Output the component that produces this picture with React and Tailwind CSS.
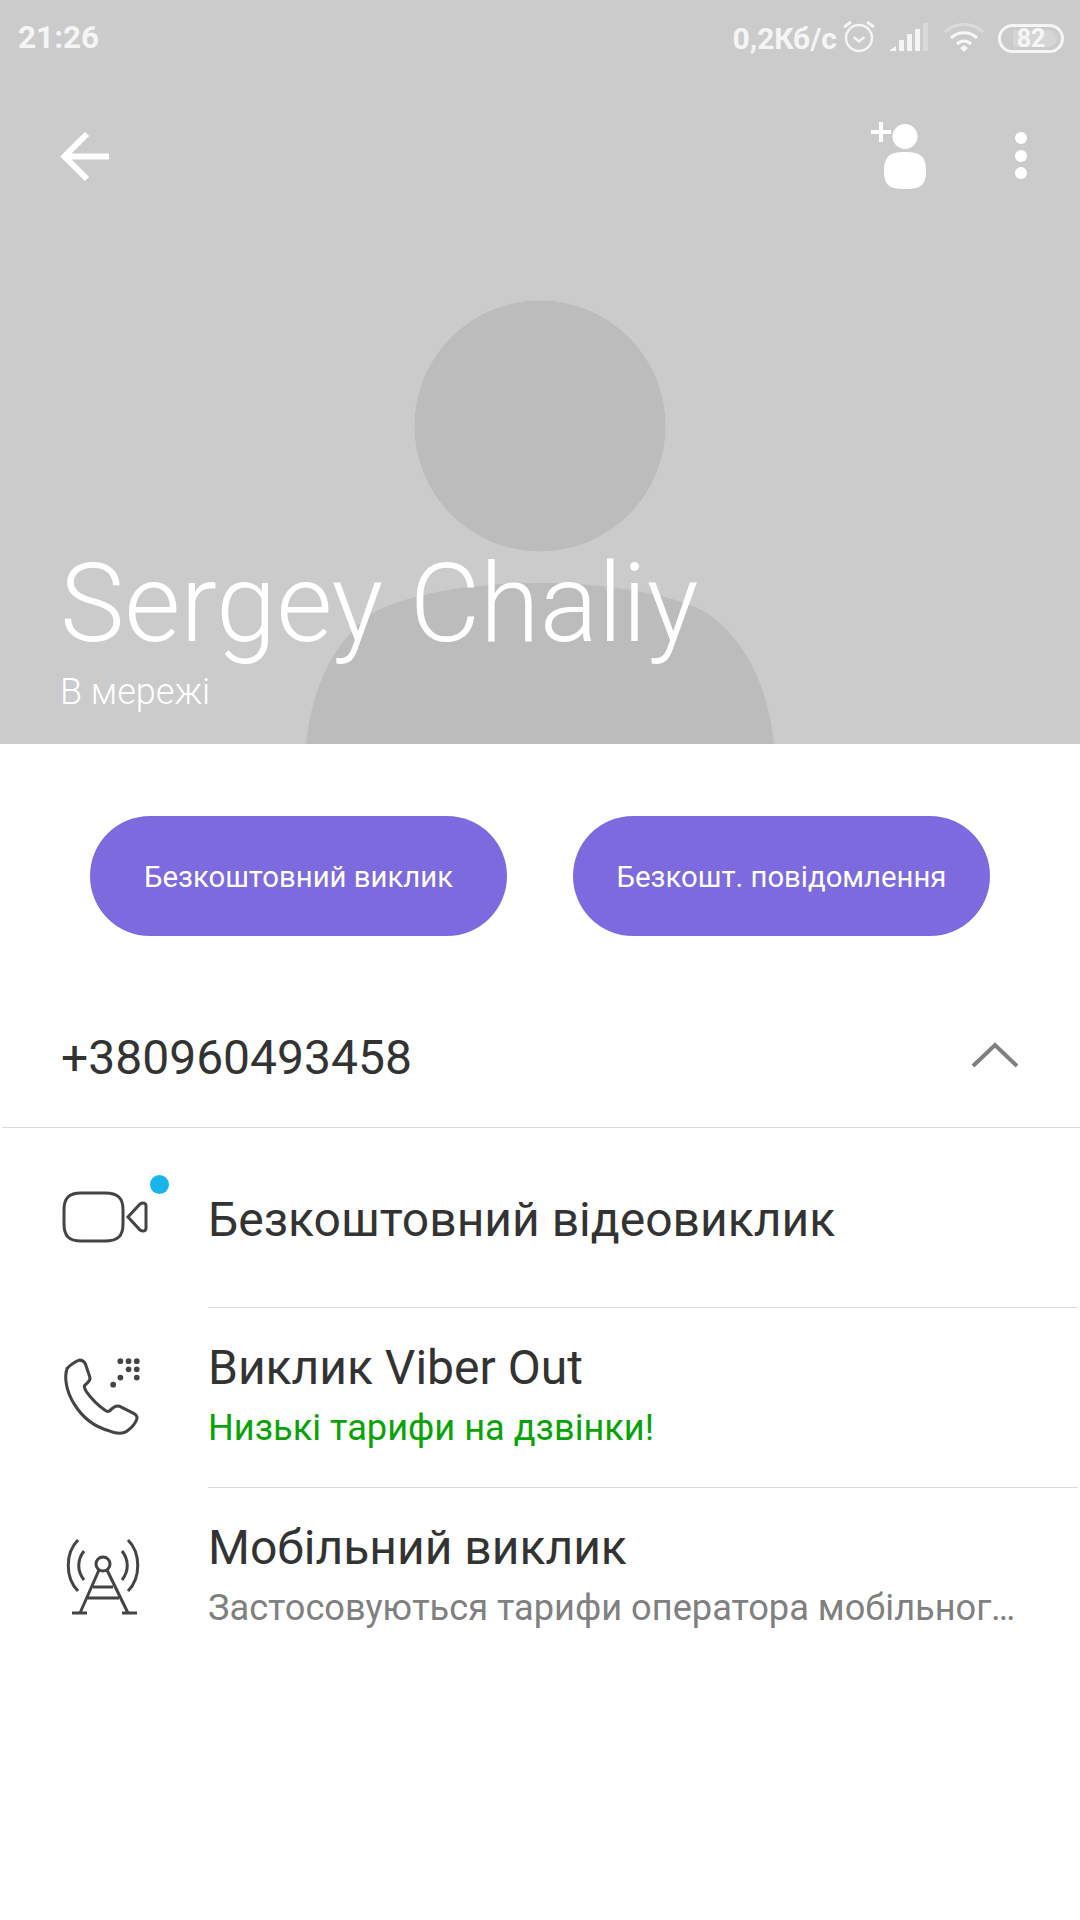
import React from 'react';

function StatusBar() {
  return (
    <div className="h-[76px] flex items-center justify-between pl-[18px] pr-[16px] text-white/80 font-bold">
      <span className="text-[31.500px]">21:26</span>
      <div className="flex items-center">
        <span className="text-[30px] mr-[4px]">0,2Кб/с</span>
        <svg width="36" height="36" viewBox="0 0 36 36" fill="none" stroke="white" strokeOpacity="0.8" strokeWidth="2.4" className="mr-[13px] -mt-[4px]">
          <circle cx="18" cy="20" r="13" />
          <path d="M12.5 19l5.5 4.5 5.5-4.5" />
          <path d="M3 9l7-5M33 9l-7-5" strokeWidth="3" />
        </svg>
        <svg width="38" height="30" viewBox="0 0 38 30" fill="white" className="mr-[16px]">
          <path d="M0 27l6-4v5H0z" fillOpacity="0.8" />
          <rect x="9" y="17" width="5" height="11" fillOpacity="0.8" />
          <rect x="17" y="11" width="5" height="17" fillOpacity="0.8" />
          <rect x="25" y="6" width="5" height="22" fillOpacity="0.8" />
          <rect x="33" y="0" width="5" height="28" fillOpacity="0.3" />
        </svg>
        <svg width="40" height="32" viewBox="0 0 40 32" fill="none" stroke="white" strokeWidth="3.2" className="mr-[14px]">
          <path d="M1 10C11 0 29 0 39 10" strokeOpacity="0.3" />
          <path d="M7 16c7-7 19-7 26 0" strokeOpacity="0.85" />
          <path d="M13 22c4-4 10-4 14 0" strokeOpacity="0.85" />
          <path d="M16 26l4-3 4 3-4 4z" fill="white" fillOpacity="0.85" stroke="none" />
        </svg>
        <div className="relative w-[66px] h-[29px] rounded-full border-[3px] border-white/80 flex items-center justify-center">
          <div className="absolute left-[12px] top-[3px] h-[17px] w-[44px] rounded-r-full bg-white/20"></div>
          <span className="relative text-[25px] leading-none text-white/80 font-bold">82</span>
        </div>
      </div>
    </div>
  );
}

function Header() {
  return (
    <div className="relative h-[744px] bg-[#cbcbcb] overflow-hidden font-['Roboto',sans-serif]">
      {/* avatar placeholder */}
      <svg className="absolute left-0 top-0" width="1080" height="744" viewBox="0 0 1080 744" fill="#bcbcbc">
        <circle cx="540" cy="426" r="125.5" />
        <path d="M306 744C312 685 335 640 373 613C410 592 480 583 540 583C600 583 670 592 707 613C745 640 768 685 774 744Z" />
      </svg>

      <div className="relative h-full flex flex-col">
        <StatusBar />
        <div className="flex items-start justify-between pl-[60px] pr-[53px] pt-[48px]">
          <svg width="50" height="50" viewBox="0 0 50 50" fill="none" stroke="white" strokeWidth="6" className="mt-[8px]">
            <path d="M49 24.5H4M27 2L4.500 24.500L27 47" />
          </svg>
          <div className="flex items-start">
            <svg width="56" height="70" viewBox="0 0 56 70" fill="white" className="-mt-[4px] mr-[88px]">
              <path d="M0 10h8V2h4v8h8v4h-8v8H8v-8H0z" />
              <circle cx="34" cy="16.500" r="12.500" />
              <path d="M34 32c16 0 21 5 21 19 0 14-5 18-21 18s-21-4-21-18c0-14 5-19 21-19z" />
            </svg>
            <div className="flex flex-col gap-[5.500px] mt-[8px]">
              <div className="w-[12px] h-[12px] rounded-full bg-white"></div>
              <div className="w-[12px] h-[12px] rounded-full bg-white"></div>
              <div className="w-[12px] h-[12px] rounded-full bg-white"></div>
            </div>
          </div>
        </div>
        <div className="mt-auto pl-[60px] pb-[32px] text-white">
          <div className="text-[108.500px] leading-[110px] font-light">Sergey Chaliy</div>
          <div className="text-[36px] leading-[40px] font-light mt-[13px]">В мережі</div>
        </div>
      </div>
    </div>
  );
}

function Row({ icon, title, sub, subColor, last }) {
  return (
    <div className="flex h-[180px]">
      <div className="w-[208px] shrink-0 relative">{icon}</div>
      <div className={`flex-1 min-w-0 mr-[2px] flex flex-col justify-center ${last ? '' : 'border-b border-[#dcdcdc]'} ${sub ? 'pb-[8px]' : 'pt-[4px]'}`}>
        <div className="text-[48px] leading-[60px] text-[#333333]">{title}</div>
        {sub && <div className={`text-[36.200px] leading-[44px] ${subColor} pr-[56px] truncate mt-[8px]`}>{sub}</div>}
      </div>
    </div>
  );
}

export default function App() {
  return (
    <div className="w-[1080px] h-[1920px] bg-white overflow-hidden font-['Roboto',sans-serif]">
      <Header />

      <div className="flex pl-[90px] gap-[66px] pt-[72px]">
        <button className="w-[417px] h-[120px] rounded-full bg-[#7c6ade] text-white text-[29.300px] pt-[3px]">Безкоштовний виклик</button>
        <button className="w-[417px] h-[120px] rounded-full bg-[#7c6ade] text-white text-[29.300px] pt-[3px]">Безкошт. повідомлення</button>
      </div>

      <div className="mt-[36px] ml-[2px] h-[156px] border-b border-[#dcdcdc] flex items-center justify-between pl-[59px] pr-[61px] pt-[16px]">
        <span className="text-[48px] text-[#333333]">+380960493458</span>
        <svg width="48" height="26" viewBox="0 0 48 26" fill="none" stroke="#808080" strokeWidth="4" className="-mt-[5px]">
          <path d="M2 24L24 3L46 24" />
        </svg>
      </div>

      <Row
        title="Безкоштовний відеовиклик"
        icon={
          <>
            <svg className="absolute left-[61px] top-[62px]" width="90" height="54" viewBox="0 0 90 54" fill="none" stroke="#444444" strokeWidth="3">
              <path d="M20 3h24c13 0 18 5 18 17v14c0 12-5 17-18 17H20C8 51 3 46 3 34V20C3 8 8 3 20 3z" />
              <path d="M67 27l12-13c3-2 6-1 6 2v22c0 3-3 4-6 2z" />
            </svg>
            <div className="absolute left-[150px] top-[47px] w-[19px] h-[19px] rounded-full bg-[#17b5ec]"></div>
          </>
        }
      />
      <Row
        title="Виклик Viber Out"
        sub="Низькі тарифи на дзвінки!"
        subColor="text-[#09a309]"
        icon={
          <svg className="absolute left-[63px] top-[48px]" width="84" height="82" viewBox="0 0 82 80" fill="none" stroke="#444444" strokeWidth="3">
            <path d="M4 12c3-3 9-7 12-8 3 0 5 2 6 4l4 12c1 3 0 4-4 8-2 1-1 4 1 7 5 7 11 13 18 18 3 2 4 1 6-1 3-3 5-4 8-3l14 7c4 2 4 5 2 8-2 4-8 10-12 11-4 1-9 0-14-2C30 69 19 60 11 47 3 34 1 21 4 12z" />
            <g fill="#444444" stroke="none">
              <circle cx="56" cy="5" r="2.800" /><circle cx="64" cy="5" r="2.800" /><circle cx="72" cy="5" r="2.800" />
              <circle cx="64" cy="13" r="2.800" /><circle cx="72" cy="13" r="2.800" />
              <circle cx="56" cy="21" r="2.800" /><circle cx="72" cy="21" r="2.800" />
              <circle cx="49" cy="28" r="2.800" />
            </g>
          </svg>
        }
      />
      <Row
        last
        title="Мобільний виклик"
        sub="Застосовуються тарифи оператора мобільного зв'язку"
        subColor="text-[#808080]"
        icon={
          <svg className="absolute left-[66px] top-[50px]" width="74" height="80" viewBox="0 0 74 80" fill="none" stroke="#444444" strokeWidth="3">
            <circle cx="37" cy="26" r="7" />
            <path d="M33 32L14 75M41 32L62 75M27 49H47M21 60H53M6 75H21M56 75H71" />
            <path d="M18 13c-7 9-7 20 0 29M56 13c7 9 7 20 0 29" />
            <path d="M12 2C-1 15-1 40 12 53M62 2c13 13 13 38 0 51" />
          </svg>
        }
      />
    </div>
  );
}
